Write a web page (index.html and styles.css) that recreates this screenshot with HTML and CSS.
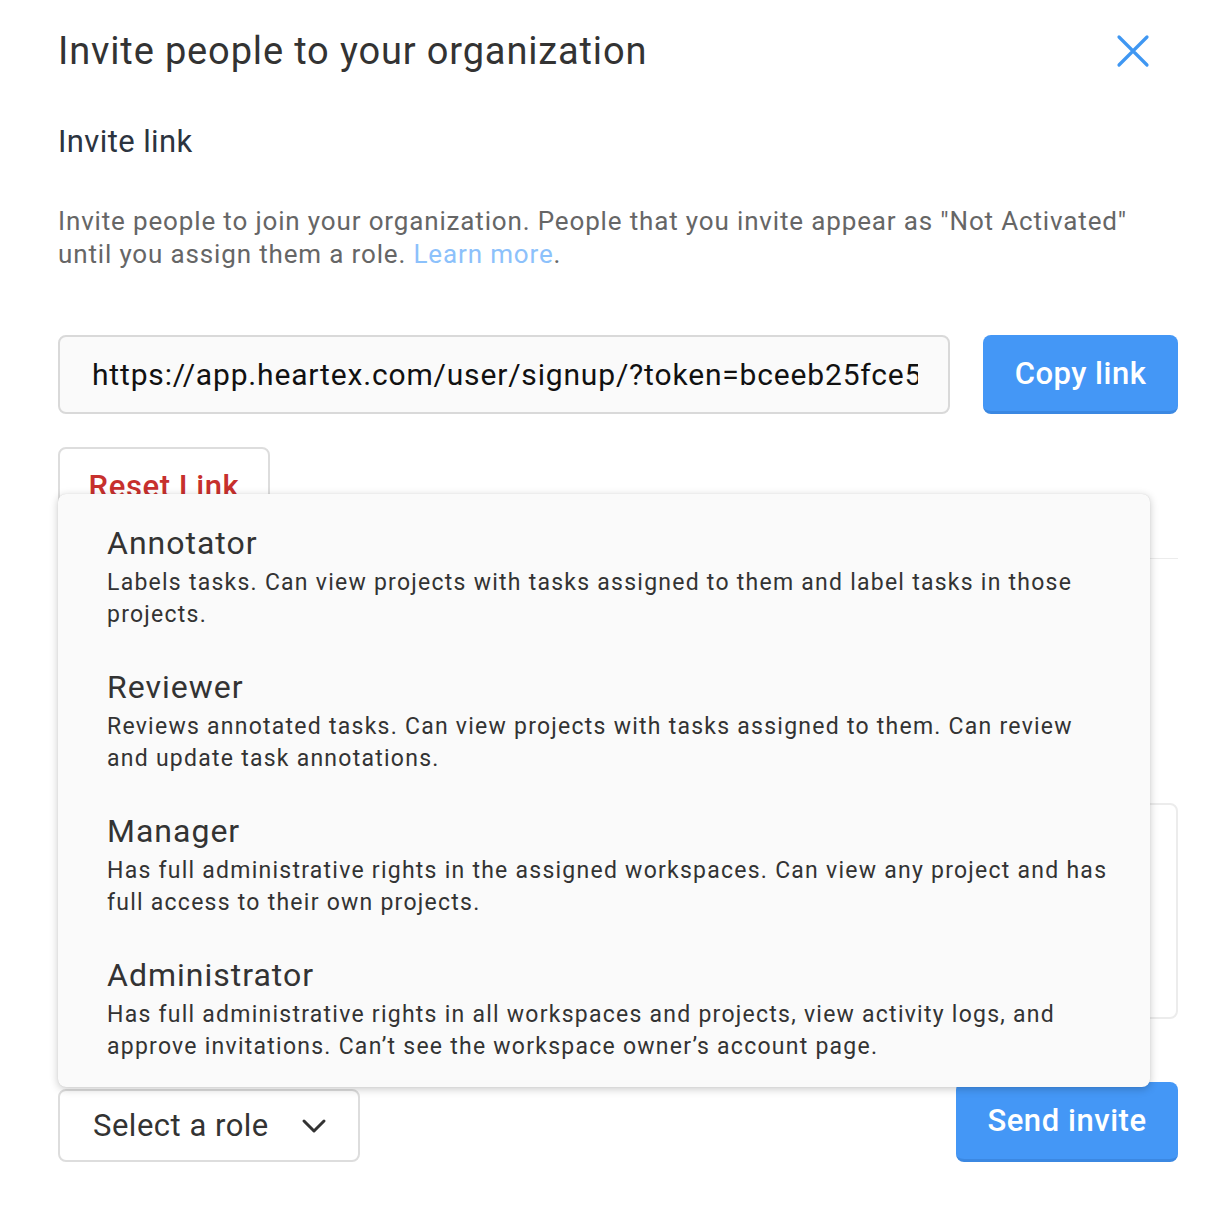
FILE: index.html
```html
<!DOCTYPE html>
<html>
<head>
<meta charset="utf-8">
<link rel="stylesheet" href="styles.css">
</head>
<body>
<div class="modal">
  <div class="header">
    <h1 class="title">Invite people to your organization</h1>
    <button class="close" aria-label="Close">
      <svg width="34" height="34" viewBox="0 0 34 34"><path d="M3 3L31 31M31 3L3 31" stroke="#3f97f2" stroke-width="3.2" stroke-linecap="round"/></svg>
    </button>
  </div>
  <h2 class="subtitle">Invite link</h2>
  <p class="desc">Invite people to join your organization. People that you invite appear as "Not Activated" until you assign them a role. <a class="link" href="#">Learn more</a>.</p>
  <div class="link-row">
    <input class="input" type="text" readonly value="https://app.heartex.com/user/signup/?token=bceeb25fce5a0c1f">
    <button class="btn primary copy">Copy link</button>
  </div>
  <div class="reset-row">
    <button class="btn outline reset">Reset Link</button>
  </div>
  <div class="divider"></div>
  <div class="emails-row">
    <div class="textarea"></div>
  </div>
  <div class="footer">
    <div class="select">
      <span>Select a role</span>
      <svg width="28" height="28" viewBox="0 0 28 28"><path d="M4 9L14 19L24 9" fill="none" stroke="#333" stroke-width="3" stroke-linecap="round" stroke-linejoin="round"/></svg>
    </div>
    <button class="btn primary send">Send invite</button>
  </div>

  <div class="dropdown">
    <div class="item">
      <div class="item-title">Annotator</div>
      <div class="item-desc">Labels tasks. Can view projects with tasks assigned to them and label tasks in those projects.</div>
    </div>
    <div class="item">
      <div class="item-title">Reviewer</div>
      <div class="item-desc">Reviews annotated tasks. Can view projects with tasks assigned to them. Can review and update task annotations.</div>
    </div>
    <div class="item">
      <div class="item-title">Manager</div>
      <div class="item-desc">Has full administrative rights in the assigned workspaces. Can view any project and has full access to their own projects.</div>
    </div>
    <div class="item">
      <div class="item-title">Administrator</div>
      <div class="item-desc">Has full administrative rights in all workspaces and projects, view activity logs, and approve invitations. Can’t see the workspace owner’s account page.</div>
    </div>
  </div>
</div>
</body>
</html>
```

FILE: styles.css
```css
* { box-sizing: border-box; }
html, body {
  margin: 0;
  padding: 0;
  background: #fff;
  font-family: Roboto, "Liberation Sans", Arial, sans-serif;
}
.modal {
  position: relative;
  width: 1228px;
  height: 1206px;
  padding: 26px 50px 0 58px;
}
.header {
  display: flex;
  justify-content: space-between;
  align-items: center;
  height: 50px;
}
.title {
  margin: 0;
  font-size: 38px;
  letter-spacing: 0.85px;
  font-weight: 400;
  color: #333;
  line-height: 50px;
}
.close {
  border: 0;
  background: none;
  padding: 0;
  margin-right: 28px;
  width: 34px;
  height: 34px;
  display: flex;
}
.subtitle {
  margin: 41px 0 0;
  font-size: 31px;
  letter-spacing: 0.4px;
  font-weight: 400;
  color: #2c3440;
  line-height: 50px;
}
.desc {
  margin: 38px 0 0;
  font-size: 26px;
  letter-spacing: 0.85px;
  line-height: 33px;
  color: #666;
  width: 1100px;
}
.link {
  color: #8cc1fb;
  text-decoration: none;
}
.link-row {
  display: flex;
  gap: 33px;
  margin-top: 64px;
}
.input {
  flex: 1;
  min-width: 0;
  height: 79px;
  border: 2px solid #d9d9d9;
  border-radius: 8px;
  background: #fafafa;
  font-family: inherit;
  font-size: 30px;
  letter-spacing: 0.83px;
  color: #111;
  padding: 0 30px 0 32px;
  outline: none;
}
.btn {
  font-family: inherit;
  font-size: 31px;
  letter-spacing: 0.5px;
  border-radius: 8px;
  cursor: pointer;
}
.primary {
  background: #4497f6;
  color: #fff;
  border: 0;
  border-bottom: 3px solid #3b88e2;
  font-weight: 500;
}
.copy {
  width: 195px;
  height: 79px;
}
.reset-row {
  margin-top: 33px;
}
.outline {
  background: #fff;
  border: 2px solid #ddd;
  color: #c7302d;
  font-weight: 500;
}
.reset {
  width: 212px;
  height: 79px;
  letter-spacing: 0.6px;
}
.divider {
  margin-top: 32px;
  height: 1px;
  background: #ececec;
}
.emails-row {
  margin-top: 244px;
  display: flex;
  justify-content: flex-end;
}
.textarea {
  width: 300px;
  height: 216px;
  border: 2px solid #ececec;
  border-radius: 8px;
}
.footer {
  margin-top: 63px;
  display: flex;
  justify-content: space-between;
  align-items: flex-end;
}
.select {
  width: 302px;
  height: 73px;
  border: 2px solid #ddd;
  border-radius: 8px;
  display: flex;
  align-items: center;
  justify-content: space-between;
  padding: 0 30px 0 33px;
  font-size: 31px;
  letter-spacing: 0.5px;
  color: #333;
}
.send {
  width: 222px;
  height: 80px;
  letter-spacing: 0.55px;
}
.dropdown {
  position: absolute;
  left: 58px;
  top: 494px;
  width: 1092px;
  height: 593px;
  background: #fafafa;
  border-radius: 8px;
  box-shadow: 0 2px 8px rgba(0,0,0,0.22), 0 0 1px rgba(0,0,0,0.15);
  padding: 25px 30px 0 49px;
}
.item {
  height: 144px;
}
.item-title {
  font-size: 32px;
  color: #333;
  letter-spacing: 1px;
  line-height: 48px;
}
.item-desc {
  font-size: 23px;
  color: #333;
  letter-spacing: 1.25px;
  line-height: 32px;
}
```
